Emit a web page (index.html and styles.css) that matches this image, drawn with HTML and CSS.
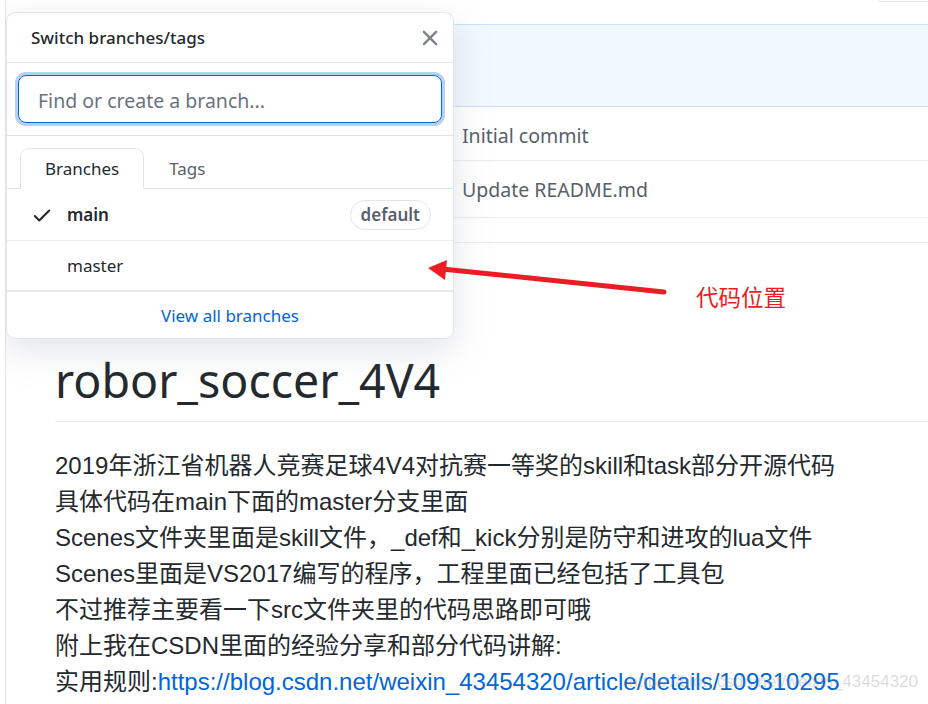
FILE: index.html
```html
<!DOCTYPE html>
<html lang="zh-CN">
<head>
<meta charset="utf-8">
<title>robor_soccer_4V4</title>
<link rel="stylesheet" href="styles.css">
</head>
<body>
<div class="page">
  <div class="topbar"><span class="topbtn"></span></div>

  <div class="files">
    <div class="files-head"></div>
    <div class="file-row"><span class="file-name"></span><span class="file-msg">Initial commit</span></div>
    <div class="file-row tall"><span class="file-name"></span><span class="file-msg">Update README.md</span></div>
  </div>

  <div class="readme">
    <h1 class="readme-title">robor_soccer_4V4</h1>
    <p class="readme-text">2019年浙江省机器人竞赛足球4V4对抗赛一等奖的skill和task部分开源代码<br>具体代码在main下面的master分支里面<br>Scenes文件夹里面是skill文件，_def和_kick分别是防守和进攻的lua文件<br>Scenes里面是VS2017编写的程序，工程里面已经包括了工具包<br>不过推荐主要看一下src文件夹里的代码思路即可哦<br>附上我在CSDN里面的经验分享和部分代码讲解:<br>实用规则:<a class="link" href="#">https://blog.csdn.net/weixin_43454320/article/details/109310295</a></p>
  </div>

  <div class="popup">
    <div class="popup-head">
      <span class="popup-title">Switch branches/tags</span>
      <svg class="close" viewBox="0 0 16 16" width="26" height="26"><path fill="currentColor" d="M3.72 3.72a.75.75 0 011.06 0L8 6.94l3.22-3.22a.75.75 0 111.06 1.06L9.06 8l3.22 3.22a.75.75 0 11-1.06 1.06L8 9.06l-3.22 3.22a.75.75 0 01-1.06-1.06L6.94 8 3.72 4.78a.75.75 0 010-1.06z"/></svg>
    </div>
    <div class="popup-filter">
      <div class="filter-input">Find or create a branch...</div>
    </div>
    <div class="tabs">
      <span class="tab active">Branches</span>
      <span class="tab">Tags</span>
    </div>
    <div class="branch">
      <svg class="check" viewBox="0 0 16 16" width="22" height="22"><path fill="currentColor" d="M13.78 4.22a.75.75 0 010 1.06l-7.25 7.25a.75.75 0 01-1.06 0L2.22 9.28a.75.75 0 011.06-1.06L6 10.94l6.72-6.72a.75.75 0 011.06 0z"/></svg>
      <span class="branch-name bold">main</span>
      <span class="badge">default</span>
    </div>
    <div class="branch last">
      <span class="check-space"></span>
      <span class="branch-name">master</span>
    </div>
    <div class="popup-foot"><a class="link" href="#">View all branches</a></div>
  </div>

  <svg class="arrow" width="260" height="50" viewBox="0 0 260 50">
    <line x1="30" y1="14" x2="252" y2="37" stroke="#ec1c24" stroke-width="5" stroke-linecap="round"/>
    <polygon points="16,13 35,5 33,25" fill="#ec1c24"/>
  </svg>
  <span class="annot-text">代码位置</span>
  <span class="watermark">https://blog.csdn.net/weixin_43454320</span>
</div>
</body>
</html>
```

FILE: styles.css
```css
* { box-sizing: border-box; }
html, body { margin: 0; padding: 0; background: #fff; }
body {
  font-family: "Noto Sans", "Noto Sans CJK SC", sans-serif;
  color: #24292e;
}
.page {
  position: relative;
  margin-left: 5px;
  border-left: 1px solid #e1e4e8;
  min-height: 704px;
  overflow: hidden;
}
.topbar {
  height: 24px;
  display: flex;
  justify-content: flex-end;
}
.topbtn {
  width: 50px;
  height: 2px;
  border-bottom: 1px solid #e6e8eb;
  border-left: 1px solid #eceef0;
  border-radius: 0 0 0 6px;
}
.files {
  border-top: 1px solid #c8e1ff;
}
.files-head {
  height: 82px;
  background: #f1f8ff;
  border-bottom: 1px solid #c8e1ff;
}
.file-row {
  display: grid;
  grid-template-columns: 456px 1fr;
  align-items: center;
  height: 54px;
  padding-top: 3px;
  border-bottom: 1px solid #eaecef;
}
.file-row.tall { height: 57px; padding-top: 1px; }
.file-msg {
  font-size: 19.5px;
  color: #586069;
}
.readme {
  margin-top: 24px;
  border-top: 1px solid #eaecef;
  padding: 104px 0 0 49px;
}
.readme-title {
  margin: 0 0 26px;
  padding: 3px 0 11px;
  font-size: 46.5px;
  line-height: 60px;
  font-weight: 400;
  border-bottom: 1px solid #eaecef;
  color: #24292e;
}
.readme-text {
  margin: 0;
  font-family: "Liberation Sans", "Noto Sans CJK SC", sans-serif;
  font-size: 24px;
  line-height: 36px;
  color: #24292e;
}
.link {
  color: #0366d6;
  text-decoration: none;
}

/* popup */
.popup {
  position: absolute;
  left: 0;
  top: 12px;
  width: 448px;
  height: 327px;
  background: #fff;
  border: 1px solid #e1e4e8;
  border-radius: 9px;
  box-shadow: 0 12px 36px rgba(140, 149, 159, 0.25);
  display: flex;
  flex-direction: column;
}
.popup-head {
  height: 50px;
  border-bottom: 1px solid #e1e4e8;
  display: flex;
  align-items: center;
  justify-content: space-between;
  padding: 0 10px 0 24px;
}
.popup-title {
  font-size: 17px;
  font-weight: 500;
  color: #24292e;
}
.close { color: #7d848c; }
.popup-filter {
  height: 73px;
  padding: 12px 11px;
  border-bottom: 1px solid #e1e4e8;
}
.filter-input {
  height: 48px;
  border: 1px solid #0366d6;
  border-radius: 8px;
  box-shadow: 0 0 0 3px rgba(3, 102, 214, 0.3);
  padding: 2px 0 0 19px;
  display: flex;
  align-items: center;
  font-size: 19.5px;
  color: #6a737d;
}
.tabs {
  height: 53px;
  padding: 12px 0 0 13px;
  border-bottom: 1px solid #e1e4e8;
  display: flex;
  align-items: stretch;
}
.tab {
  display: flex;
  align-items: center;
  padding: 0 24px;
  font-size: 17px;
  color: #586069;
  border: 1px solid transparent;
  margin-bottom: -1px;
}
.tab.active {
  color: #24292e;
  border-color: #e1e4e8;
  border-bottom-color: #fff;
  background: #fff;
  border-radius: 9px 9px 0 0;
}
.branch {
  height: 52px;
  border-bottom: 1px solid #eaecef;
  display: flex;
  align-items: center;
  padding: 0 22px 0 26px;
}
.branch.last {
  height: 51px;
  border-bottom: 2px solid #e7e9ec;
}
.check { color: #24292e; width: 22px; margin-left: -2px; }
.check-space { width: 20px; }
.branch-name {
  margin-left: 14px;
  font-size: 17px;
  color: #24292e;
  flex: 1;
}
.branch-name.bold { font-weight: 600; }
.badge {
  font-size: 17px;
  font-weight: 600;
  color: #586069;
  border: 1px solid #e1e4e8;
  border-radius: 16px;
  padding: 0 10px;
  height: 30px;
  display: flex;
  align-items: center;
}
.popup-foot {
  flex: 1;
  display: flex;
  align-items: center;
  justify-content: center;
  font-size: 17px;
}

/* annotations */
.arrow {
  position: absolute;
  left: 406px;
  top: 255px;
}
.annot-text {
  position: absolute;
  left: 690px;
  top: 281px;
  font-family: "Noto Sans CJK SC", sans-serif;
  font-size: 22.5px;
  line-height: 30px;
  color: #ec1c24;
}
.watermark {
  position: absolute;
  right: 10px;
  top: 672px;
  font-family: "Liberation Sans", sans-serif;
  font-size: 17px;
  color: rgba(150, 150, 150, 0.35);
  white-space: nowrap;
}
```
